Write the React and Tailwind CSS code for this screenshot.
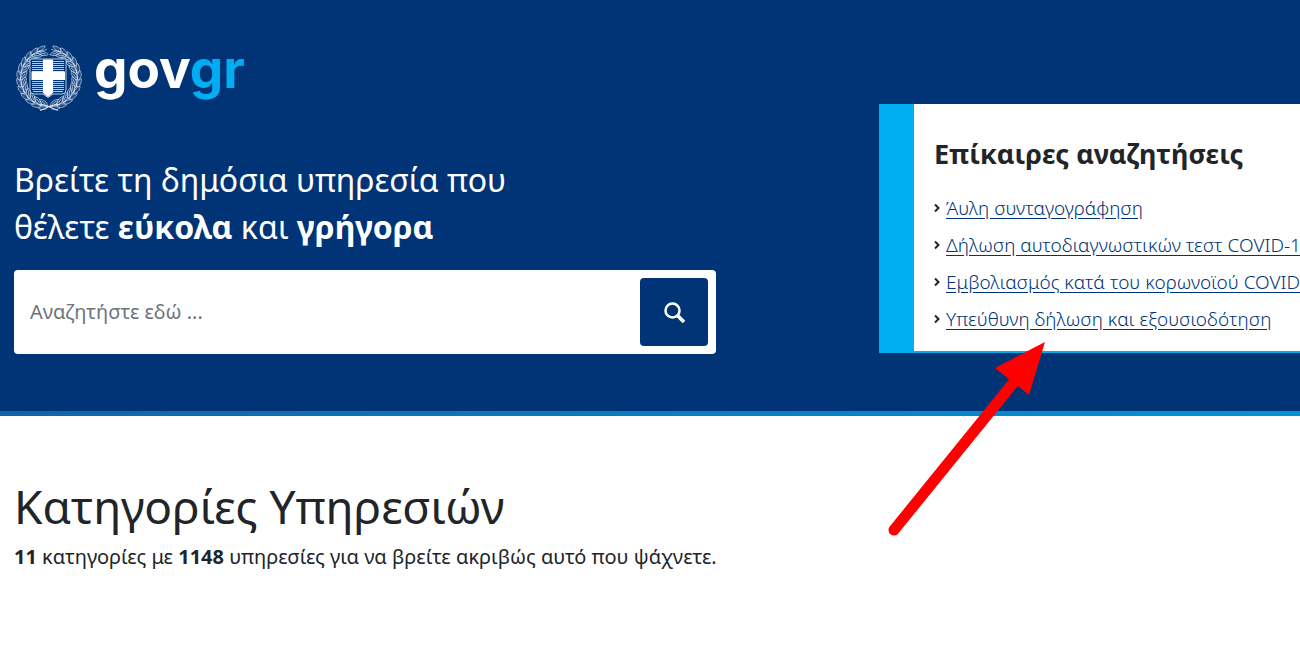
const links = [
  'Άυλη συνταγογράφηση',
  'Δήλωση αυτοδιαγνωστικών τεστ COVID-19',
  'Εμβολιασμός κατά του κορωνοϊού COVID-19',
  'Υπεύθυνη δήλωση και εξουσιοδότηση',
];

const leaves = Array.from({ length: 12 }, (_, i) => 4 + i * 14);

function Wreath() {
  return (
    <g fill="#dfe7f2" fillOpacity="0.15" stroke="#dfe7f2" strokeOpacity="0.8" strokeWidth="0.7">
      {leaves.map((angle) => (
        <g key={angle} transform={`rotate(${angle} 33 34)`}>
          <path d="M34 63C31 61.500 27 62.500 24.500 65C28 67 33 66 34 63Z" />
          <path d="M34 62C33 58 29 55.500 25 56C26 60 30 63 34 62Z" />
          <path d="M35 62.500C31 62.500 27 61 24 61.500M32 61L27.500 57.500" fill="none" />
        </g>
      ))}
    </g>
  );
}

function Emblem() {
  return (
    <svg viewBox="0 0 66 68" className="h-17 w-16.5 shrink-0 overflow-visible" role="img" aria-label="Εθνόσημο">
      <Wreath />
      <g transform="translate(66 0) scale(-1 1)">
        <Wreath />
      </g>
      <g fill="none" stroke="#dfe7f2" strokeWidth="1">
        <path d="M24 60C30 61 36 64 42 66.500M42 60C36 61 30 64 24 66.500" />
      </g>
      <path d="M14 15H50V46Q50 50 46 50H37L32 53.500L27 50H18Q14 50 14 46Z" fill="#003476" stroke="#b8c8de" strokeWidth="1" />
      <path
        d="M16 17.500H48M16 19.500H48M16 21.500H48M16 23.500H48M16 25.500H48M16 27.500H48M16 37.500H48M16 39.500H48M16 41.500H48M16 43.500H48M16 45.500H48M17 47.500H47"
        stroke="#b8c8de"
        strokeWidth="1"
      />
      <path d="M27 15.500H37V27.500H49V36H37V49L32 53L27 49V36H15.500V27.500H27Z" fill="#fff" />
    </svg>
  );
}

function Header() {
  return (
    <header className="bg-[#003476]">
      <div className="flex items-start justify-between gap-10 pl-3.5">
        <div className="min-w-0 max-w-[702px] flex-1 pt-11">
          <a href="/" className="flex items-start gap-3 pl-0.5">
            <Emblem />
            <span className="-mt-[5px] font-[Inter,sans-serif] text-[53px] leading-[60px] font-bold text-white">
              gov<span className="text-[#00adf0]">gr</span>
            </span>
          </a>
          <p className="mt-11 text-[32px] leading-[47px] font-normal text-white">
            Βρείτε τη δημόσια υπηρεσία που
            <br />
            θέλετε <strong className="font-bold">εύκολα</strong> και{' '}
            <strong className="font-bold">γρήγορα</strong>
          </p>
          <form className="mt-5 flex items-center rounded bg-white p-2" role="search">
            <input
              type="search"
              aria-label="Αναζήτηση"
              placeholder="Αναζητήστε εδώ ..."
              className="min-w-0 flex-1 px-2 text-[20px] leading-7 font-normal text-[#212529] outline-none placeholder:text-[#6c757d]"
            />
            <button
              type="button"
              aria-label="Αναζήτηση"
              className="flex size-17 items-center justify-center rounded bg-[#003476]"
            >
              <svg viewBox="0 0 22 22" className="size-5.5" fill="none" stroke="#fff">
                <circle cx="9.500" cy="9.500" r="7" strokeWidth="2.600" />
                <path d="M14.500 14.500L21 21" strokeWidth="3.600" />
              </svg>
            </button>
          </form>
        </div>
        <aside className="mt-26 w-[421px] shrink-0 overflow-hidden border-b-2 border-l-[35px] border-[#00adf0] bg-white pt-8 pb-3.5 pl-5 whitespace-nowrap">
          <h2 className="text-[27px] leading-9 font-bold text-[#212529]">Επίκαιρες αναζητήσεις</h2>
          <ul className="mt-[17px]">
            {links.map((label) => (
              <li key={label} className="flex h-[37px] items-center gap-1.5">
                <svg viewBox="0 0 6 10" className="h-2.5 w-1.5 shrink-0" fill="none" stroke="#212529" strokeWidth="2">
                  <path d="M1 1.500L4.500 5L1 8.500" />
                </svg>
                <a href="#" className="text-[19px] leading-7 font-light text-[#003476] underline underline-offset-3">
                  {label}
                </a>
              </li>
            ))}
          </ul>
        </aside>
      </div>
      <div className="mt-[57px] h-[5px] bg-linear-to-r from-[#1064a6] to-[#0093d8]" />
    </header>
  );
}

function Arrow() {
  return (
    <svg
      viewBox="0 0 160 200"
      className="pointer-events-none absolute top-[340px] right-[252px] h-50 w-40"
      aria-hidden="true"
    >
      <path d="M6 190L126 42" stroke="#f00" strokeWidth="11" strokeLinecap="round" />
      <path d="M157 2L107 28L141 55Z" fill="#f00" />
    </svg>
  );
}

export default function App() {
  return (
    <div className="relative min-h-screen overflow-x-hidden bg-white font-['Noto_Sans',sans-serif]">
      <Header />
      <main className="px-3.5 pt-[59px] text-[#212529]">
        <h1 className="text-[46px] leading-[62px] font-normal">Κατηγορίες Υπηρεσιών</h1>
        <p className="mt-1.5 text-[20px] leading-7 font-normal">
          <strong className="font-bold">11</strong> κατηγορίες με <strong className="font-bold">1148</strong> υπηρεσίες
          για να βρείτε ακριβώς αυτό που ψάχνετε.
        </p>
      </main>
      <Arrow />
    </div>
  );
}
